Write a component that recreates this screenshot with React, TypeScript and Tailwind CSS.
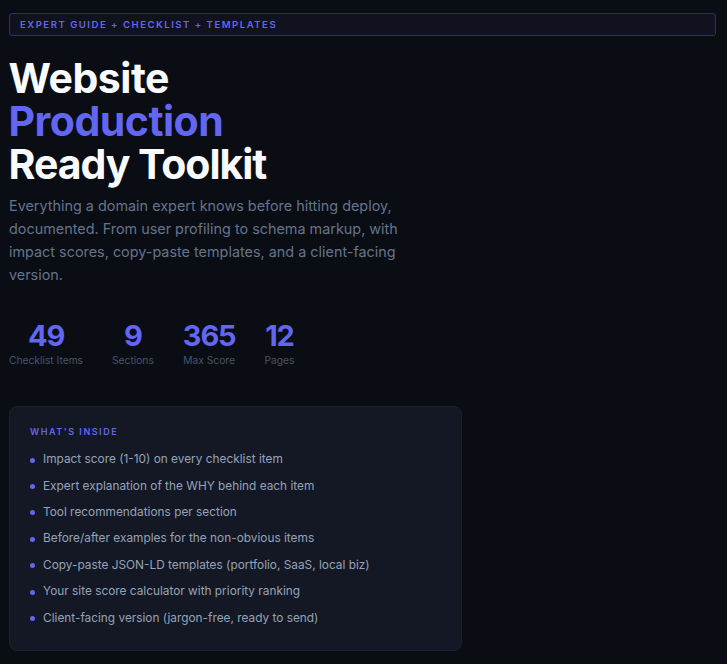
const STATS = [
  { value: '49', label: 'Checklist Items' },
  { value: '9', label: 'Sections' },
  { value: '365', label: 'Max Score' },
  { value: '12', label: 'Pages' },
];

const ITEMS = [
  'Impact score (1-10) on every checklist item',
  'Expert explanation of the WHY behind each item',
  'Tool recommendations per section',
  'Before/after examples for the non-obvious items',
  'Copy-paste JSON-LD templates (portfolio, SaaS, local biz)',
  'Your site score calculator with priority ranking',
  'Client-facing version (jargon-free, ready to send)',
];

export default function App() {
  return (
    <div className="h-[664px] overflow-hidden bg-[#0a0d14] bg-[radial-gradient(circle,rgba(255,255,255,0.035)_0.7px,transparent_1px)] bg-[size:22.7px_22.7px] bg-[position:-1.75px_8px] px-[9px] pt-[13px] font-['Inter',sans-serif]">
      {/* Badge */}
      <div className="mr-[2px] flex h-[23px] items-center rounded-[3px] border border-[#2b2f6e] bg-[#10121f] px-[10px] pt-[2px] text-[9.6px] font-semibold tracking-[0.155em] text-[#6366f1]">
        EXPERT GUIDE + CHECKLIST + TEMPLATES
      </div>

      <h1 className="mt-[21px] -ml-[0.5px] text-[41px] leading-[43px] font-bold tracking-[-0.025em] text-[#f8fafc]">
        <span className="tracking-[-0.012em]">Website</span>
        <br />
        <span className="tracking-[-0.012em] text-[#6366f1]">Production</span>
        <br />
        Ready Toolkit
      </h1>

      <p className="mt-[8px] w-[400px] text-[14.4px] leading-[23px] text-[#64748b]">
        Everything a domain expert knows before hitting deploy, documented. From user profiling to schema markup, with impact scores, copy-paste templates, and a client-facing version.
      </p>

      {/* Stats */}
      <div className="mt-[34px] flex gap-[29px]">
        {STATS.map((s) => (
          <div key={s.label} className="flex flex-col items-center">
            <div className="text-[29px] leading-[32px] font-bold tracking-[-0.04em] text-[#6366f1]">{s.value}</div>
            <div className="mt-[1px] text-[10.24px] leading-[14px] text-[#475569]">{s.label}</div>
          </div>
        ))}
      </div>

      {/* What's inside */}
      <div className="mt-[39px] h-[245px] w-[453px] rounded-[8px] border border-[#1c2130] bg-[#141824] px-[20px] pt-[18px]">
        <div className="text-[9px] leading-[13px] font-semibold tracking-[0.17em] text-[#6366f1]">WHAT'S INSIDE</div>
        <ul className="mt-[9px]">
          {ITEMS.map((item) => (
            <li key={item} className="flex h-[26.4px] items-center gap-[8px] text-[11.85px] text-[#94a3b8]">
              <span className="h-[5px] w-[5px] rounded-full bg-[#6366f1]" />
              {item}
            </li>
          ))}
        </ul>
      </div>
    </div>
  );
}
